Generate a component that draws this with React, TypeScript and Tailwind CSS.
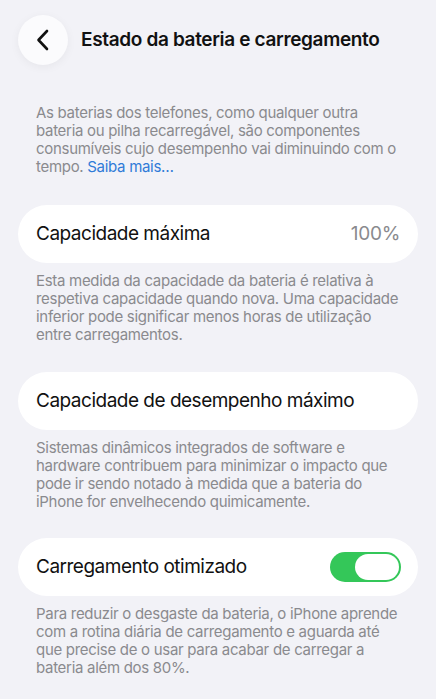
import React from "react";

const Note = ({ children }: { children: React.ReactNode }) => (
  <p className="mx-[36px] mt-[9px] text-[15px] leading-[18px] text-[#8a8a8e] tracking-[-0.3px]">
    {children}
  </p>
);

export default function App() {
  return (
    <div
      className="w-[436px] h-[699px] bg-[#f2f2f7] overflow-hidden"
      style={{ fontFamily: "Inter, 'Noto Sans', sans-serif" }}
    >
      <div className="flex items-center pt-[15px] pl-[18px]">
        <div className="w-[50px] h-[50px] rounded-full bg-[#fbfbfd] shadow-[0_2px_10px_rgba(0,0,0,0.05)] flex items-center justify-center">
          <svg width="14" height="22" viewBox="0 0 14 22" fill="none">
            <path d="M11 2 L2.5 11 L11 20" stroke="#111" strokeWidth="2.6" strokeLinecap="round" strokeLinejoin="round" />
          </svg>
        </div>
        <h1 className="ml-[13px] text-[19px] font-semibold text-[#111] tracking-[-0.35px]">
          Estado da bateria e carregamento
        </h1>
      </div>

      <p className="mx-[36px] mt-[39px] text-[15px] leading-[18px] text-[#8a8a8e] tracking-[-0.3px]">
        As baterias dos telefones, como qualquer outra bateria ou pilha recarregável, são componentes consumíveis cujo desempenho vai diminuindo com o tempo.{" "}
        <span className="text-[#2f7bd8]">Saiba mais…</span>
      </p>

      <div className="mx-[18px] mt-[29px] h-[58px] rounded-[29px] bg-white flex items-center justify-between px-[18px]">
        <span className="text-[19px] text-[#111] tracking-[-0.5px]">Capacidade máxima</span>
        <span className="text-[19px] text-[#8a8a8e] tracking-[-0.3px]">100%</span>
      </div>
      <Note>
        Esta medida da capacidade da bateria é relativa à respetiva capacidade quando nova. Uma capacidade inferior pode significar menos horas de utilização entre carregamentos.
      </Note>

      <div className="mx-[18px] mt-[28px] h-[58px] rounded-[29px] bg-white flex items-center px-[18px]">
        <span className="text-[19px] text-[#111] tracking-[-0.5px]">Capacidade de desempenho máximo</span>
      </div>
      <Note>
        Sistemas dinâmicos integrados de software e hardware contribuem para minimizar o impacto que pode ir sendo notado à medida que a bateria do iPhone for envelhecendo quimicamente.
      </Note>

      <div className="mx-[18px] mt-[27px] h-[58px] rounded-[29px] bg-white flex items-center justify-between pl-[18px] pr-[17px]">
        <span className="text-[19px] text-[#111] tracking-[-0.5px]">Carregamento otimizado</span>
        <div className="w-[71px] h-[30px] rounded-full bg-[#34c759] flex items-center justify-end pr-[2px]">
          <div className="w-[44px] h-[26px] rounded-full bg-white" />
        </div>
      </div>
      <Note>
        Para reduzir o desgaste da bateria, o iPhone aprende com a rotina diária de carregamento e aguarda até que precise de o usar para acabar de carregar a bateria além dos 80%.
      </Note>
    </div>
  );
}
